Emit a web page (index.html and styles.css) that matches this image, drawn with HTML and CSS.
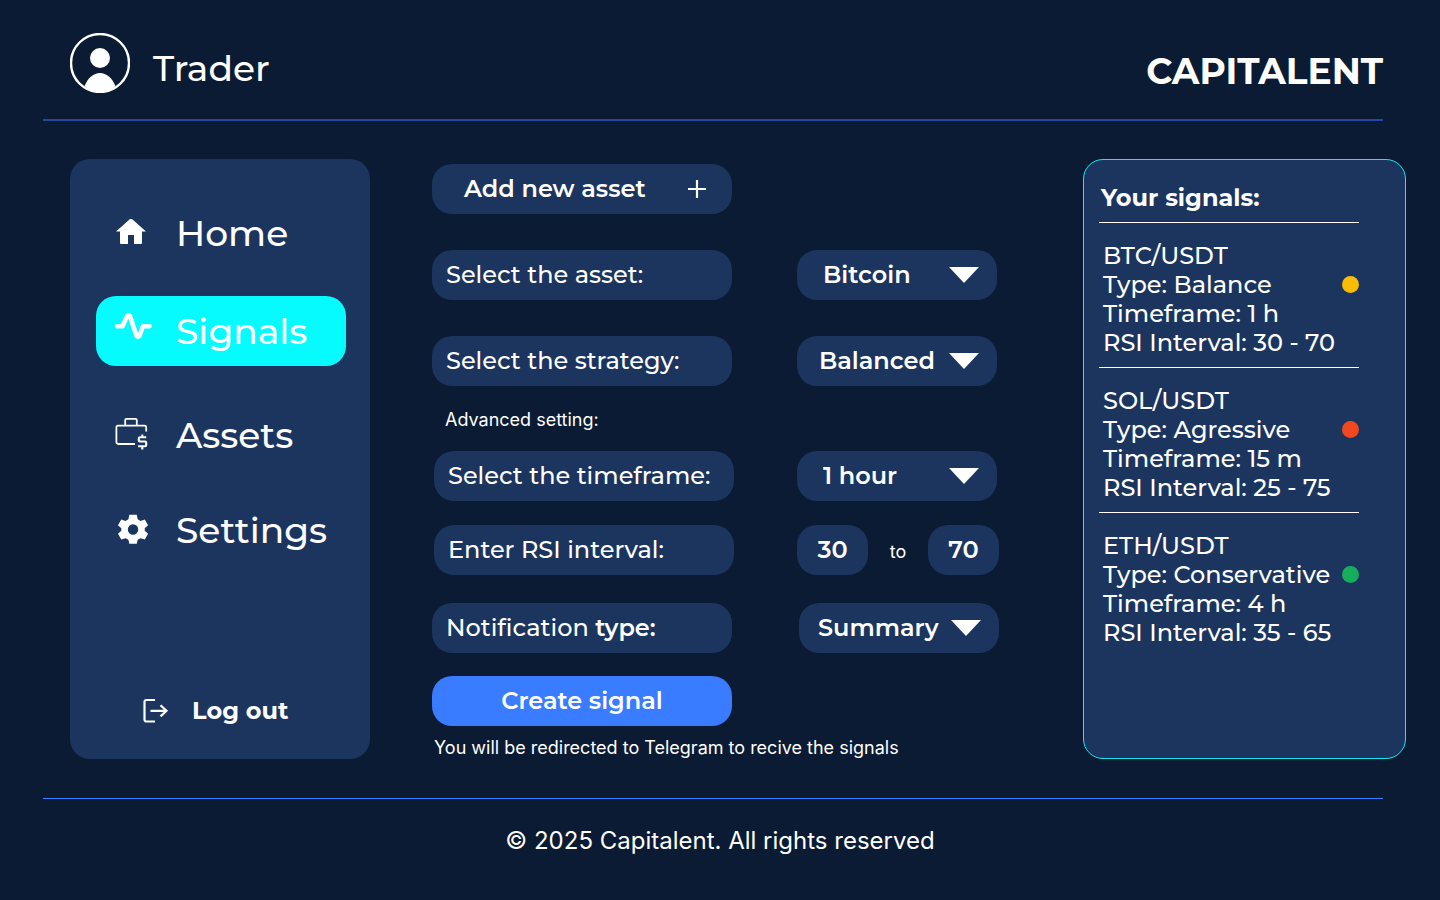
FILE: index.html
```html
<!DOCTYPE html>
<html lang="en">
<head>
<meta charset="utf-8">
<meta name="viewport" content="width=device-width, initial-scale=1">
<title>Capitalent – Signals</title>
<link rel="stylesheet" href="styles.css">
</head>
<body>
<header class="header">
  <div class="user">
    <svg class="avatar" viewBox="0 0 60 60" aria-hidden="true">
      <circle cx="30" cy="30" r="29" fill="none" stroke="#fff" stroke-width="2.4"/>
      <circle cx="30" cy="25" r="10" fill="#fff"/>
      <path d="M14.500 53C18 45 23.500 40 30 40s12 5 15.500 13C41 57 36 59.500 30 59.500S19 57 14.500 53z" fill="#fff"/>
    </svg>
    <span class="user-name">Trader</span>
  </div>
  <div class="brand">CAPITALENT</div>
</header>

<main class="main">
  <nav class="sidebar" aria-label="Main">
    <a class="nav-link" href="#home">
      <svg class="nav-icon" viewBox="0 0 40 40" aria-hidden="true"><path d="M18 7 4 19.500h4V31q0 1 1 1h7v-9h6v9h7q1 0 1-1V19.500h4L20 7z" fill="#fff" transform="translate(-1 -1)"/></svg>
      <span>Home</span>
    </a>
    <a class="nav-link nav-link-active" href="#signals" aria-current="page">
      <svg class="nav-icon" viewBox="0 0 40 40" aria-hidden="true"><path d="M4 15.300H9.500L14 5.200Q15.600 3.300 17 5.200L23.500 24.800Q25 26.600 26.500 24.800L30 15.300H36.500" fill="none" stroke="#fff" stroke-width="4.600" stroke-linecap="round" stroke-linejoin="round"/></svg>
      <span>Signals</span>
    </a>
    <a class="nav-link" href="#assets">
      <svg class="nav-icon" viewBox="0 0 40 40" aria-hidden="true"><g fill="none" stroke="#fff" stroke-width="1.800" stroke-linejoin="round"><path d="M22 29H5.300Q3.400 29 3.400 27V12.200Q3.400 10.600 5 10.600H31.500Q33.200 10.600 33.200 12.200V16.500M12.200 10.600V5Q12.200 3.800 13.400 3.800H22.600Q23.800 3.800 23.800 5V10.600"/><path d="M33.200 22.300H27Q25.800 22.300 25.800 23.500V25.500Q25.800 26.500 27 26.500H32Q33.200 26.500 33.200 27.700V30Q33.200 31.300 32 31.300H25M29.300 19.500V22.300M29.300 31.300V34.500" stroke-width="2.100"/></g></svg>
      <span>Assets</span>
    </a>
    <a class="nav-link" href="#settings">
      <svg class="nav-icon" viewBox="0 0 40 40" aria-hidden="true"><path fill="#fff" fill-rule="evenodd" d="M17 5h8l1 5 3 1.700 4.600-1.500 3.600 6.200-3.600 3.200v2.800l3.600 3.200-3.600 6.200-4.600-1.500-3 1.700-1 4.200h-8l-1-4.200-3-1.700-4.600 1.500-3.600-6.200 3.600-3.200v-2.800l-3.600-3.200 3.600-6.200 4.600 1.500 3-1.700zM21 15.400a5.600 5.600 0 1 0 0 11.200 5.600 5.600 0 0 0 0-11.200z" transform="translate(.5 0) scale(.93)"/></svg>
      <span>Settings</span>
    </a>
    <button class="logout" type="button">
      <svg class="logout-icon" viewBox="0 0 28 28" aria-hidden="true"><path d="M14 3H5.500Q3.500 3 3.500 5V22.500Q3.500 24.500 5.500 24.500H14M9.500 13.800H25.500M19.500 8.200 25.500 13.800 19.500 19.400" fill="none" stroke="#fff" stroke-width="2.200"/></svg>
      <span>Log out</span>
    </button>
  </nav>

  <form class="form">
    <button class="pill add" type="button">
      <span>Add new asset</span>
      <svg class="add-icon" viewBox="0 0 18 18" aria-hidden="true"><path d="M9 0V18M0 9H18" stroke="#fff" stroke-width="2.200"/></svg>
    </button>
    <div class="row row-wide">
      <label class="pill label" for="asset">Select the asset:</label>
      <div class="select-box">
        <select class="pill select select-short" id="asset"><option>Bitcoin</option></select>
        <svg class="arrow" viewBox="0 0 30 16" aria-hidden="true"><path d="M0 0H30L15 16z" fill="#fff"/></svg>
      </div>
    </div>
    <div class="row row-wide">
      <label class="pill label" for="strategy">Select the strategy:</label>
      <div class="select-box">
        <select class="pill select" id="strategy"><option>Balanced</option></select>
        <svg class="arrow" viewBox="0 0 30 16" aria-hidden="true"><path d="M0 0H30L15 16z" fill="#fff"/></svg>
      </div>
    </div>
    <h2 class="advanced">Advanced setting:</h2>
    <div class="row row-inset">
      <label class="pill label" for="timeframe">Select the timeframe:</label>
      <div class="select-box">
        <select class="pill select select-short" id="timeframe"><option>1 hour</option></select>
        <svg class="arrow" viewBox="0 0 30 16" aria-hidden="true"><path d="M0 0H30L15 16z" fill="#fff"/></svg>
      </div>
    </div>
    <div class="row row-inset row-close">
      <label class="pill label" for="rsi-from">Enter RSI interval:</label>
      <div class="range">
        <input class="pill number" id="rsi-from" type="text" inputmode="numeric" value="30">
        <label class="to" for="rsi-to">to</label>
        <input class="pill number" id="rsi-to" type="text" inputmode="numeric" value="70">
      </div>
    </div>
    <div class="row row-apart">
      <label class="pill label" for="notification"><span>Notification <b class="strong">type:</b></span></label>
      <div class="select-box">
        <select class="pill select select-long" id="notification"><option>Summary</option></select>
        <svg class="arrow" viewBox="0 0 30 16" aria-hidden="true"><path d="M0 0H30L15 16z" fill="#fff"/></svg>
      </div>
    </div>
    <button class="pill create" type="submit">Create signal</button>
    <p class="hint">You will be redirected to Telegram to recive the signals</p>
  </form>

  <aside class="signals">
    <h2 class="signals-title">Your signals:</h2>
    <ul class="signal-list">
      <li class="signal">
        <div>BTC/USDT</div>
        <div class="signal-type">Type: Balance<span class="dot dot-balance"></span></div>
        <div>Timeframe: 1 h</div>
        <div>RSI Interval: 30 - 70</div>
      </li>
      <li class="signal">
        <div>SOL/USDT</div>
        <div class="signal-type">Type: Agressive<span class="dot dot-aggressive"></span></div>
        <div>Timeframe: 15 m</div>
        <div>RSI Interval: 25 - 75</div>
      </li>
      <li class="signal">
        <div>ETH/USDT</div>
        <div class="signal-type">Type: Conservative<span class="dot dot-conservative"></span></div>
        <div>Timeframe: 4 h</div>
        <div>RSI Interval: 35 - 65</div>
      </li>
    </ul>
  </aside>
</main>

<footer class="footer">© 2025 Capitalent. All rights reserved</footer>
</body>
</html>
```

FILE: styles.css
```css
* {
  box-sizing: border-box;
}

body {
  margin: 0;
  min-height: 100vh;
  background: #0b1b33;
  color: #fff;
  font-family: Montserrat, Inter, sans-serif;
  font-size: 24px;
  font-weight: 500;
  line-height: 29px;
}

button,
input,
select {
  margin: 0;
  border: 0;
  color: inherit;
  font: inherit;
}

.header {
  display: flex;
  justify-content: space-between;
  align-items: center;
  height: 121px;
  margin: 0 57px 0 43px;
  padding: 7px 0 0 27px;
  border-bottom: 2px solid #23479f;
}

.user {
  display: flex;
  align-items: center;
  gap: 23px;
}

.avatar {
  width: 60px;
  height: 60px;
}

.user-name {
  padding-top: 10px;
  font-size: 36px;
  line-height: 44px;
}

.brand {
  padding-top: 16px;
  font-size: 36px;
  font-weight: 700;
  line-height: 44px;
}

.main {
  display: grid;
  grid-template-columns: 300px minmax(567px, 1fr) 323px;
  gap: 62px;
  padding: 38px 34px 39px 70px;
}

.sidebar {
  display: flex;
  flex-direction: column;
  min-height: 600px;
  padding: 39px 24px 28px 26px;
  border-radius: 20px;
  background: #1b355f;
}

.nav-link {
  display: flex;
  align-items: center;
  gap: 23px;
  height: 70px;
  margin-bottom: 25px;
  padding-left: 17px;
  border-radius: 20px;
  color: #fff;
  font-size: 36px;
  line-height: 44px;
  text-decoration: none;
}

.nav-link-active {
  margin-top: 3px;
  margin-bottom: 34px;
  background: #06fbff;
}

.nav-icon {
  width: 40px;
  height: 40px;
}

.logout {
  display: flex;
  align-items: center;
  gap: 23px;
  margin-top: auto;
  padding: 6px 45px;
  background: none;
  font-weight: 700;
}

.logout-icon {
  width: 28px;
  height: 28px;
}

.form {
  padding-top: 5px;
}

.pill {
  height: 50px;
  padding-bottom: 2px;
  border-radius: 20px;
  background: #1b355f;
}

.add {
  display: flex;
  align-items: center;
  justify-content: space-between;
  width: 300px;
  padding: 0 26px 1px 32px;
  font-weight: 600;
}

.add-icon {
  width: 18px;
  height: 18px;
}

.row {
  display: grid;
  grid-template-columns: 300px 200px;
  gap: 65px;
}

.row-wide {
  margin-top: 36px;
}

.row-close {
  margin-top: 24px;
}

.row-inset {
  gap: 63px;
  margin-left: 2px;
}

.row-apart {
  gap: 67px;
  margin-top: 28px;
}

.label {
  display: flex;
  align-items: center;
  padding-left: 14px;
  white-space: nowrap;
}

.strong {
  font-weight: 600;
}

.select-box {
  display: grid;
  align-items: center;
}

.select {
  grid-area: 1 / 1;
  width: 100%;
  padding: 0 52px 2px 22px;
  appearance: none;
  font-weight: 600;
}

.select-short {
  padding-left: 26px;
}

.select-long {
  padding-left: 19px;
}

.arrow {
  grid-area: 1 / 1;
  justify-self: end;
  width: 30px;
  height: 16px;
  margin-right: 18px;
  pointer-events: none;
}

.advanced {
  margin: 23px 0 20px 13px;
  font-family: Inter, sans-serif;
  font-size: 18px;
  font-weight: 400;
  line-height: 22px;
}

.range {
  display: flex;
  align-items: center;
  justify-content: space-between;
  width: 202px;
}

.number {
  width: 71px;
  padding: 0 0 2px;
  font-weight: 600;
  text-align: center;
}

.to {
  padding-top: 4px;
  font-family: Inter, sans-serif;
  font-size: 18px;
  font-weight: 400;
  line-height: 22px;
}

.create {
  width: 300px;
  margin-top: 23px;
  background: #397cff;
  font-weight: 600;
}

.hint {
  margin: 11px 0 0 2px;
  font-family: Inter, sans-serif;
  font-size: 18px;
  font-weight: 400;
  line-height: 22px;
}

.signals {
  padding: 23px 46px 24px 15px;
  border: 1px solid #17e9f2;
  border-radius: 20px;
  background: #1b355f;
}

.signals-title {
  margin: 0;
  padding: 0 2px 10px;
  border-bottom: 1px solid #fff;
  font-size: 24px;
  font-weight: 700;
  line-height: 29px;
}

.signal-list {
  margin: 0;
  padding: 0;
  list-style: none;
}

.signal {
  padding: 18px 0 10px 4px;
  white-space: nowrap;
}

.signal + .signal {
  border-top: 1px solid #fff;
}

.signal-type {
  display: flex;
  align-items: center;
  justify-content: space-between;
}

.dot {
  width: 17px;
  height: 17px;
  border-radius: 50%;
}

.dot-balance {
  background: #fbbc05;
}

.dot-aggressive {
  background: #f24822;
}

.dot-conservative {
  background: #16ad5c;
}

.footer {
  margin: 0 57px 0 43px;
  padding: 27px 0 32px 14px;
  border-top: 1px solid #397cff;
  font-family: Inter, sans-serif;
  font-weight: 400;
  text-align: center;
}
```
